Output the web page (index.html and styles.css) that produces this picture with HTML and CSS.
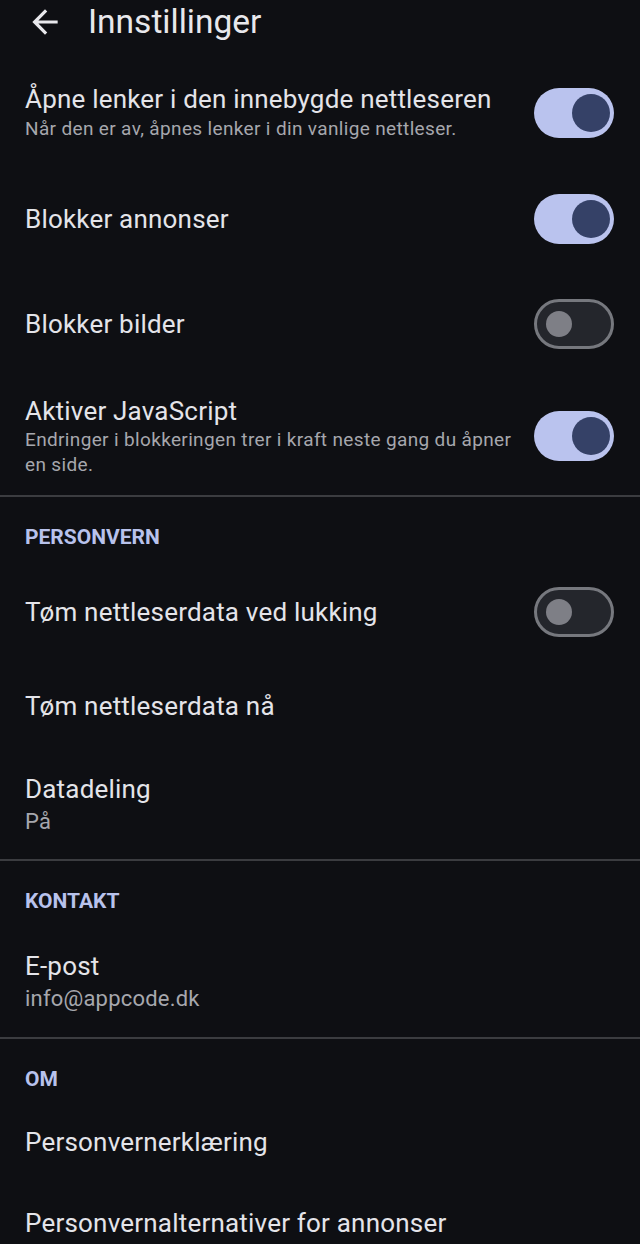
FILE: index.html
```html
<!DOCTYPE html>
<html lang="nb">
<head>
	<meta charset="UTF-8">
	<title>Innstillinger</title>
	<link rel="stylesheet" href="styles.css">
</head>
<body>

	<div class="topbar">
		<svg class="back" viewBox="0 0 24 24"><path d="M20 11H7.83l5.59-5.59L12 4l-8 8 8 8 1.41-1.41L7.83 13H20v-2z"/></svg>
		<h1 class="page-tit">Innstillinger</h1>
	</div>

	<div class="group">
		<div class="row r1">
			<div class="txt">
				<div class="tit">Åpne lenker i den innebygde nettleseren</div>
				<div class="sub">Når den er av, åpnes lenker i din vanlige nettleser.</div>
			</div>
			<span class="switch on"><i></i></span>
		</div>
		<div class="row r2">
			<div class="txt"><div class="tit">Blokker annonser</div></div>
			<span class="switch on"><i></i></span>
		</div>
		<div class="row r3">
			<div class="txt"><div class="tit">Blokker bilder</div></div>
			<span class="switch"><i></i></span>
		</div>
		<div class="row r4">
			<div class="txt">
				<div class="tit">Aktiver JavaScript</div>
				<div class="sub s-js">Endringer i blokkeringen trer i kraft neste gang du åpner en side.</div>
			</div>
			<span class="switch on"><i></i></span>
		</div>
	</div>

	<div class="group">
		<h3 class="cat">PERSONVERN</h3>
		<div class="row r5">
			<div class="txt"><div class="tit">Tøm nettleserdata ved lukking</div></div>
			<span class="switch"><i></i></span>
		</div>
		<div class="row r5">
			<div class="txt"><div class="tit">Tøm nettleserdata nå</div></div>
		</div>
		<div class="row r6">
			<div class="txt">
				<div class="tit">Datadeling</div>
				<div class="sub big">På</div>
			</div>
		</div>
	</div>

	<div class="group">
		<h3 class="cat">KONTAKT</h3>
		<div class="row r7">
			<div class="txt">
				<div class="tit">E-post</div>
				<div class="sub big">info@appcode.dk</div>
			</div>
		</div>
	</div>

	<div class="group last">
		<h3 class="cat tight">OM</h3>
		<div class="row r8">
			<div class="txt"><div class="tit">Personvernerklæring</div></div>
		</div>
		<div class="row r8">
			<div class="txt"><div class="tit">Personvernalternativer for annonser</div></div>
		</div>
	</div>

</body>
</html>
```

FILE: styles.css
```css
html, body{ margin: 0; padding: 0; background: #0e0f13;}
body{ width: 640px; height: 1244px; overflow: hidden; font-family: Roboto, "Noto Sans", sans-serif; color: #e3e3e8;}

.topbar{ display: flex; align-items: center; height: 44px; padding-bottom: 16px;}
.back{ width: 38px; height: 38px; margin-left: 26px; fill: #e8e8ec;}
.page-tit{ margin: 0 0 0 24px; font-size: 33.5px; font-weight: 400; line-height: 44px; color: #e8e8ec;}

.group{ border-bottom: 2px solid #3b3c40;}
.group.last{ border-bottom: 0;}

.cat{ margin: 0; padding: 28px 25px 16px; height: 24px; line-height: 24px; font-size: 21px; font-weight: 700; color: #b8c2ec;}
.cat.tight{ padding-bottom: 10px;}

.row{ display: flex; align-items: center; padding: 0 26px 0 25px; box-sizing: border-box;}
.r1{ height: 106px;}
.r2{ height: 105px;}
.r3{ height: 106px;}
.r4{ height: 118px;}
.r5{ height: 94px;}
.r6{ height: 106px;}
.r7{ height: 108px;}
.r8{ height: 81px;}

.txt{ flex: 1; min-width: 0;}
.tit{ font-size: 26px; line-height: 32px; letter-spacing: 0.2px; color: #e4e4e9;}
.sub{ font-size: 19px; line-height: 28px; letter-spacing: 0.35px; color: #a6a7ad;}
.s-js{ padding-right: 10px; line-height: 25px;}
.sub.big{ font-size: 22px; line-height: 34px; letter-spacing: 0.2px;}

/* switches */
.switch{ position: relative; flex: none; display: block; width: 80px; height: 50px; box-sizing: border-box; border: 3px solid #76787e; border-radius: 25px; background: #24262c;}
.switch i{ position: absolute; left: 9px; top: 9px; width: 26px; height: 26px; border-radius: 50%; background: #7e7f86;}
.switch.on{ border: 0; background: #bac3ee;}
.switch.on i{ left: 38px; top: 6px; width: 38px; height: 38px; background: #354167;}
```
